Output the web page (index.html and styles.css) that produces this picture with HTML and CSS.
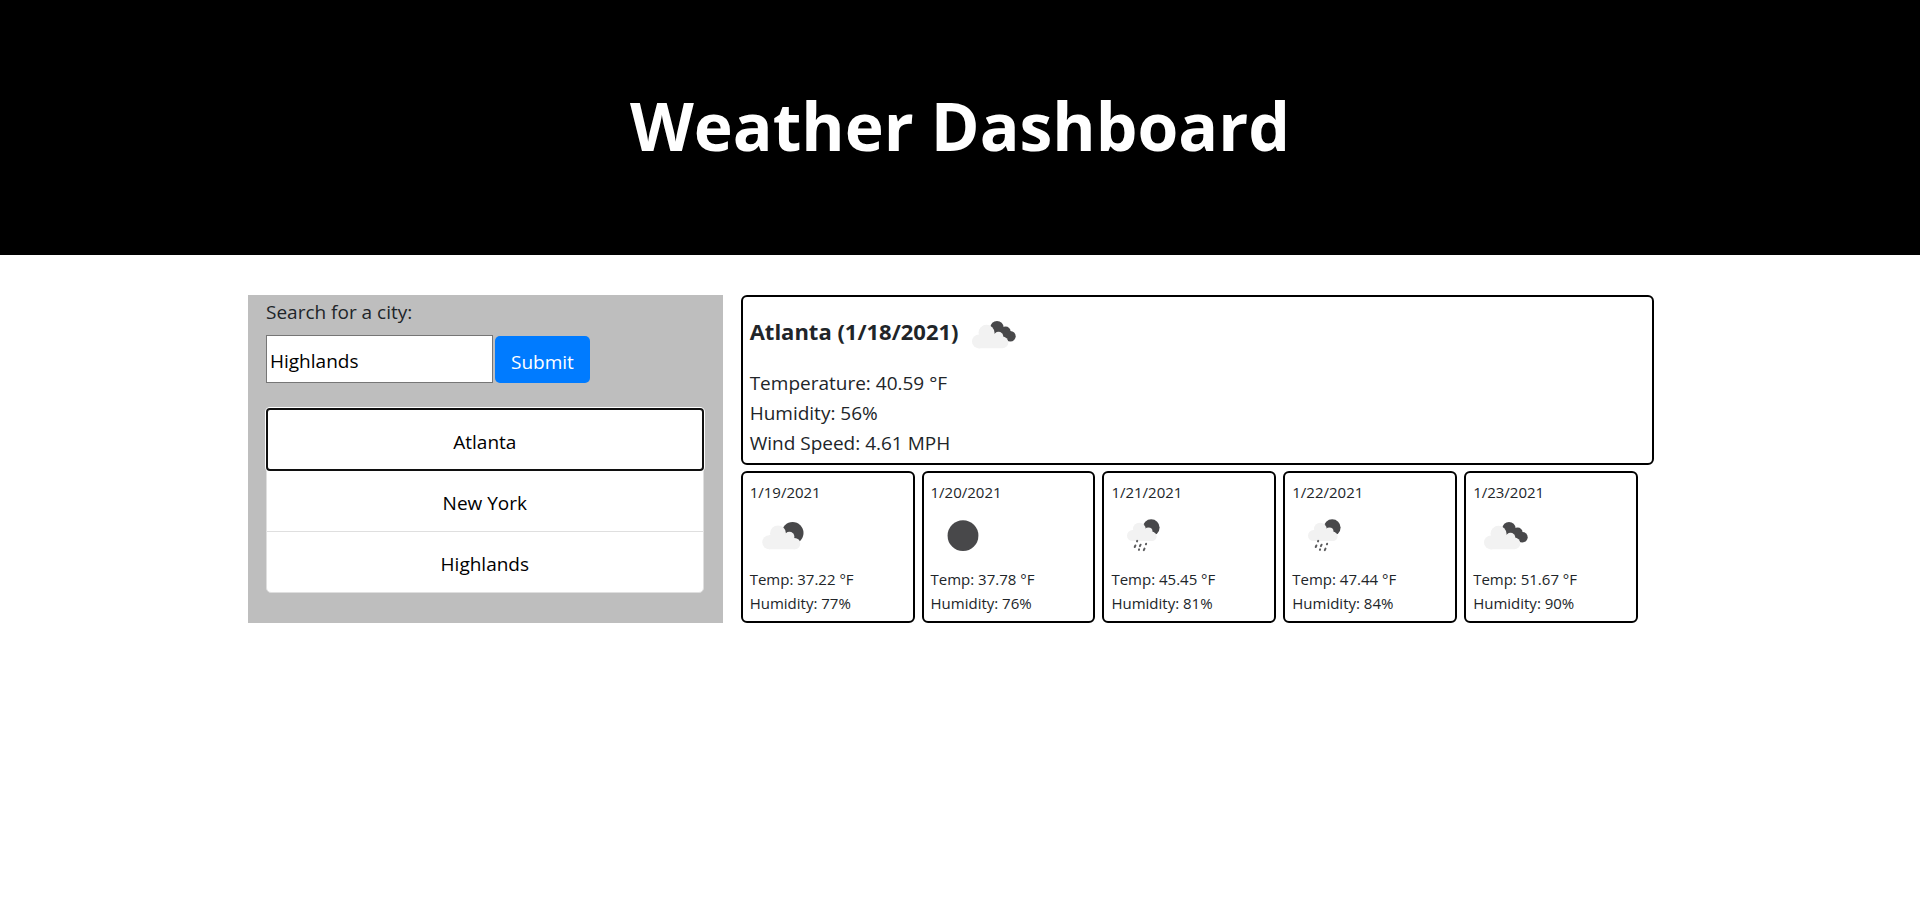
FILE: index.html
```html
<!DOCTYPE html>
<html lang="en">
<head>
<meta charset="utf-8">
<meta name="viewport" content="width=device-width, initial-scale=1">
<title>Weather Dashboard</title>
<link rel="stylesheet" href="styles.css">
</head>
<body>
<svg class="sprite" aria-hidden="true">
  <symbol id="broken-clouds" viewBox="0 0 62 62">
    <g class="dark"><circle cx="36" cy="23.5" r="6.6"/><circle cx="44.6" cy="27.600" r="5"/><circle cx="49.4" cy="32.200" r="5.300"/><path d="M37 22l8 2 5 5-3 8-10-6z"/></g>
    <g class="cloud"><circle cx="25.5" cy="28.8" r="8"/><circle cx="37.5" cy="32.6" r="4.8"/><circle cx="18" cy="37.4" r="7"/><circle cx="41.4" cy="38.4" r="5.900"/><path d="M18 30h19l5 8-.6 6.300H18z"/></g>
  </symbol>
  <symbol id="few-clouds" viewBox="0 0 62 62">
    <circle class="dark" cx="42.6" cy="28" r="10.9"/>
    <g class="cloud"><circle cx="28" cy="28.5" r="8"/><circle cx="39.4" cy="31.8" r="5"/><circle cx="19.3" cy="37.2" r="7"/><circle cx="44.6" cy="38.6" r="5.7"/><path d="M19 30h20l6 8-.4 6.300H19z"/></g>
  </symbol>
  <symbol id="clear" viewBox="0 0 62 62"><circle class="dark" cx="32" cy="30.7" r="15.4"/></symbol>
  <symbol id="rain" viewBox="0 0 62 62">
    <circle class="dark" cx="40.2" cy="22.6" r="8.4"/>
    <g class="cloud"><circle cx="28.3" cy="24" r="6.3"/><circle cx="37.4" cy="26.6" r="4.1"/><circle cx="21.5" cy="30.6" r="5.5"/><circle cx="41" cy="31.4" r="4.600"/><path d="M21 25h16l5 6-1 5H21z"/></g>
    <path class="drops" d="M26.200 35.900l-.2.500M24.400 40.500l-.7 1.500M29.600 39.700l-.7 1.500M28.100 44.400l-.2.500M35.100 38.800l-.2.500M33.500 43.600l-.7 1.500"/>
  </symbol>
</svg>
<header class="banner"><h1>Weather Dashboard</h1></header>
<main class="container">
  <aside class="search">
    <form>
      <label for="city">Search for a city:</label>
      <div class="field"><input id="city" type="text" value="Highlands"><button class="submit" type="button">Submit</button></div>
    </form>
    <div class="cities">
      <button class="city selected" type="button">Atlanta</button>
      <button class="city" type="button">New York</button>
      <button class="city" type="button">Highlands</button>
    </div>
  </aside>
  <section class="weather">
    <article class="card current">
      <h2>Atlanta (1/18/2021)<svg class="icon"><use href="#broken-clouds"/></svg></h2>
      <p>Temperature: 40.59 °F</p>
      <p>Humidity: 56%</p>
      <p>Wind Speed: 4.61 MPH</p>
    </article>
    <div class="forecast">
      <article class="card day"><p class="date">1/19/2021</p><svg class="icon"><use href="#few-clouds"/></svg><p>Temp: 37.22 °F</p><p>Humidity: 77%</p></article>
      <article class="card day"><p class="date">1/20/2021</p><svg class="icon"><use href="#clear"/></svg><p>Temp: 37.78 °F</p><p>Humidity: 76%</p></article>
      <article class="card day"><p class="date">1/21/2021</p><svg class="icon"><use href="#rain"/></svg><p>Temp: 45.45 °F</p><p>Humidity: 81%</p></article>
      <article class="card day"><p class="date">1/22/2021</p><svg class="icon"><use href="#rain"/></svg><p>Temp: 47.44 °F</p><p>Humidity: 84%</p></article>
      <article class="card day"><p class="date">1/23/2021</p><svg class="icon"><use href="#broken-clouds"/></svg><p>Temp: 51.67 °F</p><p>Humidity: 90%</p></article>
    </div>
  </section>
</main>
</body>
</html>
```
FILE: styles.css
```css
* { box-sizing: border-box; }
body {
  margin: 0;
  background: #fff;
  color: #212529;
  font: 19px/30px "Segoe UI", "Open Sans", "Noto Sans", sans-serif;
}
h1, h2, p { margin: 0; }
button, input { font: inherit; color: #000; }
.sprite { position: absolute; width: 0; height: 0; }
.dark { fill: #48484a; }
.cloud { fill: #f2f2f2; }
.drops { stroke: #5c5c5e; stroke-width: 2; stroke-linecap: round; }

.banner { background: #000; padding: 82px 20px 86px; text-align: center; }
h1 { color: #fff; font-size: 66px; line-height: 87px; font-weight: 700; }

.container {
  display: grid;
  grid-template-columns: 1fr 2fr;
  max-width: 1424px;
  margin: 40px auto;
}
.search { background: #bebebe; padding: 2px 19px 30px 18px; }
label { display: block; margin-bottom: 8px; }
.field { display: flex; align-items: flex-end; gap: 2px; }
.field input {
  width: 227px;
  height: 48px;
  padding: 4px 3px 0;
  border: 1px solid #767676;
  border-radius: 0;
  background: #fff;
}
.submit {
  height: 47px;
  padding: 4px 16px 0;
  border: 0;
  border-radius: 5px;
  background: #007bff;
  color: #fff;
}
.cities { display: flex; flex-direction: column; margin-top: 25px; }
.city {
  height: 62px;
  margin-bottom: -1px;
  padding: 4px 20px 0;
  border: 1px solid #dfdfdf;
  background: #fff;
}
.city:last-child { margin-bottom: 0; border-radius: 0 0 5px 5px; }
.selected {
  position: relative;
  height: 63px;
  border-radius: 4px;
  border: 2px solid #101010;
  box-shadow: 0 0 0 1px #fff;
}

.weather { padding: 0 18px; display: flex; flex-direction: column; gap: 6px; }
.card { border: 2px solid #000; border-radius: 6px; }
.icon { display: block; width: 62px; height: 62px; }
.current { padding: 7px 7px 5px; }
.current h2 {
  display: flex;
  align-items: flex-start;
  gap: 2px;
  font-size: 22px;
  line-height: 55px;
  font-weight: 700;
  margin-bottom: 2px;
}
.forecast {
  display: grid;
  grid-template-columns: repeat(5, 1fr);
  gap: 7px;
  margin-right: 16px;
  font-size: 15px;
  line-height: 24px;
}
.day { padding: 7px 7px 6px; }
.date { margin-bottom: 1px; }
```
